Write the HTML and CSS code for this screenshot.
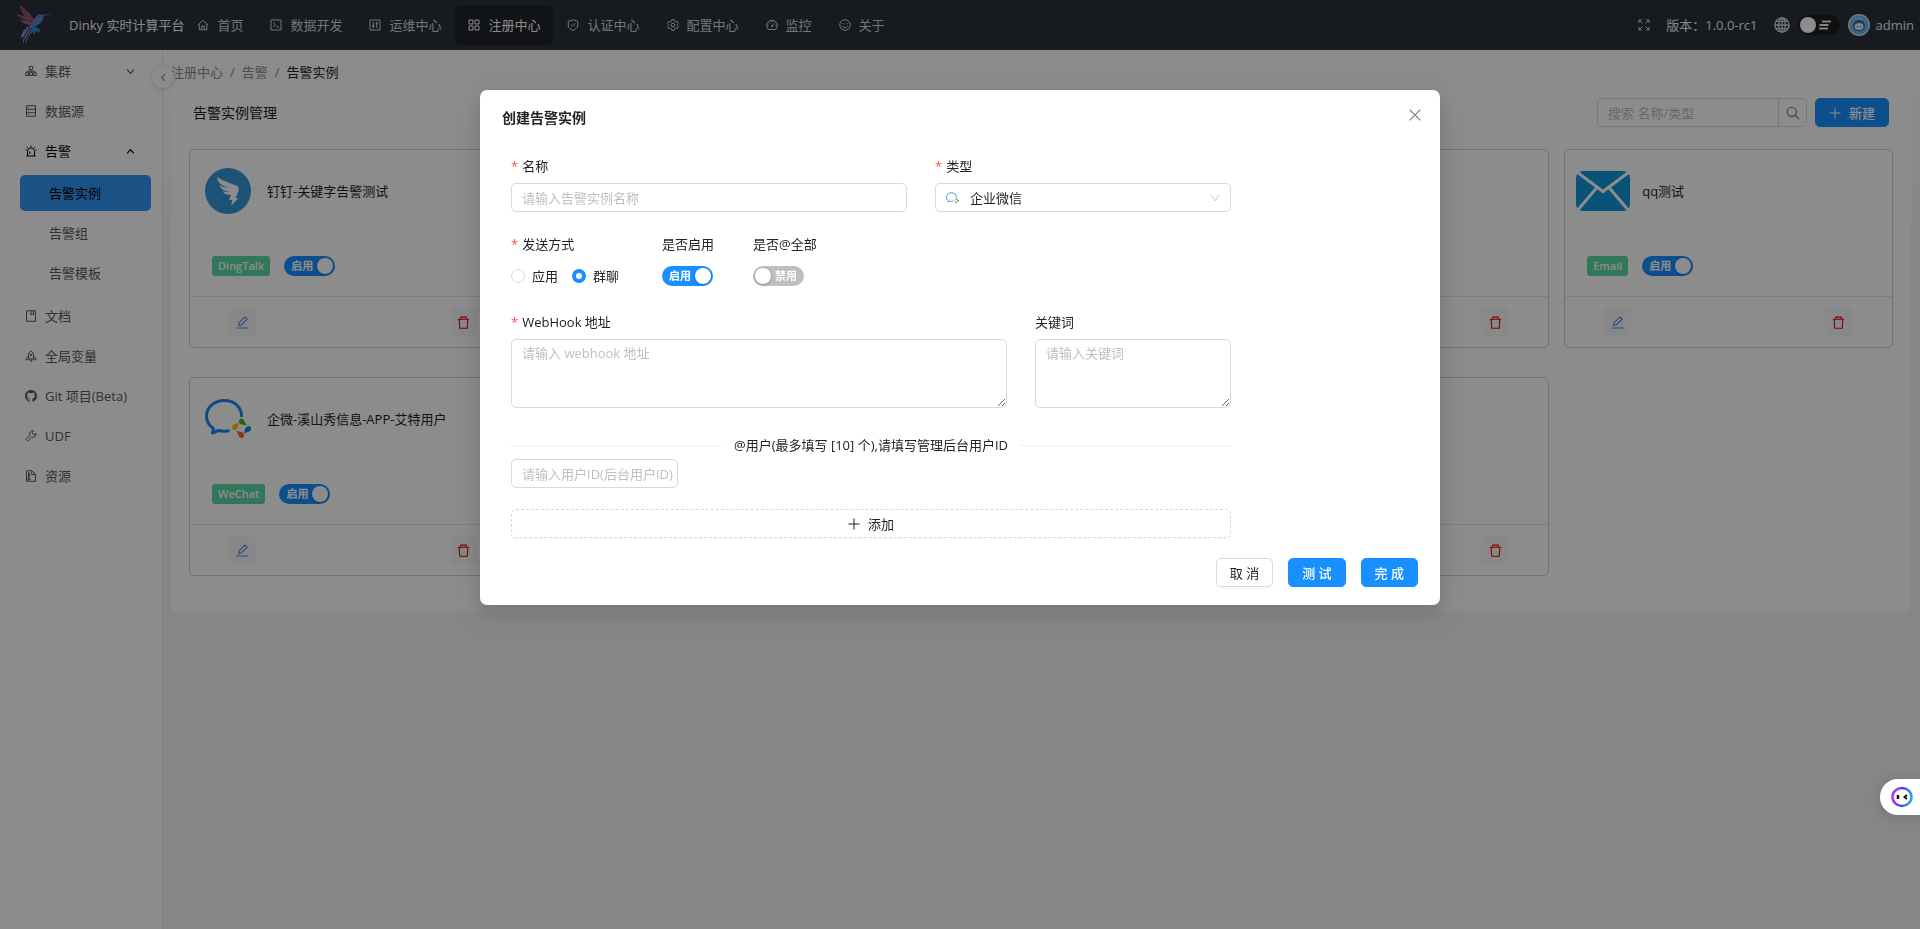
FILE: index.html
```html
<!DOCTYPE html>
<html lang="zh-CN">
<head>
<meta charset="utf-8">
<title>Dinky 实时计算平台</title>
<link rel="stylesheet" href="styles.css">
</head>
<body>
<svg class="sprite" aria-hidden="true">
  <symbol id="home" viewBox="0 0 24 24"><path d="M1.500 12.500 12 2.500l10.500 10M4.500 10.500V21.500h15V10.500M9.500 21v-7h5v7"/></symbol>
  <symbol id="code" viewBox="0 0 24 24"><path d="M2 2h20v20H2zM6.500 7.500l4.500 4-4.500 4M12.500 16h5"/></symbol>
  <symbol id="control" viewBox="0 0 24 24"><path d="M2 2h20v20H2zM8.500 6v12M15.500 6v12"/><circle cx="8.500" cy="14.500" r="1.600"/><circle cx="15.500" cy="9" r="1.600"/></symbol>
  <symbol id="grid" viewBox="0 0 24 24"><path d="M2 2h8v8H2zM14 2h8v8h-8zM2 14h8v8H2zM14 14h8v8h-8z"/></symbol>
  <symbol id="shield" viewBox="0 0 24 24"><path d="M12 1.500 21.500 4.500V14c0 3.500-5 6.500-9.500 9-4.500-2.500-9.500-5.500-9.500-9V4.500zM7.500 11l3.500 3.500 5.500-6"/></symbol>
  <symbol id="gear" viewBox="0 0 24 24"><path d="M9.500 1.500h5l.8 3.200 2.200 1.300 3.200-1 2.300 4.200-2.300 2.300v1l2.300 2.300-2.300 4.200-3.200-1-2.200 1.300-.8 3.200h-5l-.8-3.200L6.500 18l-3.200 1L1 14.800l2.300-2.300v-1L1 9.200 3.300 5l3.200 1 2.200-1.300z"/><circle cx="12" cy="12" r="3.600"/></symbol>
  <symbol id="dash" viewBox="0 0 24 24"><path d="M5 21a10.500 10.500 0 1 1 14 0zM12 14l4-5M12 4v3M5 7l2 2M3 13h2.500M18.500 13H21M17 6l1 1"/><circle cx="12" cy="14.500" r="1.500"/></symbol>
  <symbol id="smile" viewBox="0 0 24 24"><circle cx="12" cy="12" r="10.500"/><path d="M8 8v2M16 8v2M7.500 13.500c1 5.500 8 5.500 9 0"/></symbol>
  <symbol id="expand" viewBox="0 0 24 24"><path d="M2 8V2h6M2 2l7 7M16 2h6v6M22 2l-7 7M2 16v6h6M2 22l7-7M16 22h6v-6M22 22l-7-7"/></symbol>
  <symbol id="globe" viewBox="0 0 24 24"><circle cx="12" cy="12" r="10.500"/><ellipse cx="12" cy="12" rx="5" ry="10.500"/><path d="M12 1.500v21M1.500 12h21M3.500 6.500h17M3.500 17.500h17"/></symbol>
  <symbol id="cluster" viewBox="0 0 24 24"><path d="M8.500 3h7v6h-7zM1.500 15.500h6v5.500h-6zM9 15.500h6v5.500H9zM16.500 15.500h6v5.500h-6zM12 9v6.500M4.500 15.500v-3h15v3"/></symbol>
  <symbol id="database" viewBox="0 0 24 24"><path d="M3 1.500h18v21H3zM3 8.500h18M3 15.500h18M6.500 5h1M6.500 12h1M6.500 19h1"/></symbol>
  <symbol id="alert" viewBox="0 0 24 24"><path d="M5 22V12.500a7 7 0 0 1 14 0V22M2.500 22h19M9.500 18v-5M12 1v2.500M3.500 3.500l2 2M20.500 3.500l-2 2M1 10h2M21 10h2"/></symbol>
  <symbol id="book" viewBox="0 0 24 24"><path d="M3 1.500h18v21H3zM12 2v8l2.500-2 2.500 2V2"/></symbol>
  <symbol id="rocket" viewBox="0 0 24 24"><path d="M12 1.500c-4 3-5 6-5 9V18h10v-7.500c0-3-1-6-5-9zM7 12l-4.500 4.500V20L7 18M17 12l4.500 4.500V20L17 18M10 18v4h4v-4"/><circle cx="12" cy="10" r="1.800"/></symbol>
  <symbol id="github" viewBox="0 0 16 16"><path d="M8 0C3.580 0 0 3.580 0 8c0 3.540 2.290 6.530 5.470 7.590.4.070.55-.17.55-.38 0-.19-.01-.82-.01-1.490-2.010.37-2.530-.49-2.690-.94-.09-.23-.48-.94-.82-1.130-.28-.15-.68-.52-.01-.53.63-.01 1.080.58 1.230.82.72 1.210 1.870.87 2.330.66.07-.52.28-.87.51-1.070-1.780-.2-3.640-.89-3.640-3.950 0-.87.31-1.590.82-2.150-.08-.2-.36-1.020.08-2.120 0 0 .67-.21 2.200.82.64-.18 1.320-.27 2-.27s1.360.09 2 .27c1.530-1.040 2.200-.82 2.200-.82.44 1.100.16 1.920.08 2.120.51.56.82 1.270.82 2.150 0 3.070-1.870 3.750-3.650 3.950.29.25.54.73.54 1.480 0 1.070-.01 1.930-.01 2.200 0 .21.15.46.55.38A8.010 8.010 0 0 0 16 8c0-4.420-3.580-8-8-8z" fill="currentColor" stroke="none"/></symbol>
  <symbol id="tool" viewBox="0 0 24 24"><path d="M15.500 1.800a6.500 6.500 0 0 0-5.800 9L1.800 18.700l3.500 3.500 7.900-7.900a6.500 6.500 0 0 0 8.700-7.800L18 10.200 13.800 6l3.700-3.900z"/></symbol>
  <symbol id="zip" viewBox="0 0 24 24"><path d="M3 1.500h10.500l7.500 7v14H3zM13.500 2v7H21M7 4v12M9.500 6v8M6 17h4v3H6z"/></symbol>
  <symbol id="down" viewBox="0 0 24 24"><path d="M3 7l9 10 9-10"/></symbol>
  <symbol id="caret" viewBox="0 0 24 24"><path d="M2 4l10 15L22 4"/></symbol>
  <symbol id="up" viewBox="0 0 24 24"><path d="M3 17l9-10 9 10"/></symbol>
  <symbol id="left" viewBox="0 0 24 24"><path d="M16 3l-9 9 9 9"/></symbol>
  <symbol id="search" viewBox="0 0 24 24"><circle cx="10" cy="10" r="7.800"/><path d="M15.500 15.500l7 7"/></symbol>
  <symbol id="plus" viewBox="0 0 24 24"><path d="M12 1v22M1 12h22"/></symbol>
  <symbol id="close" viewBox="0 0 24 24"><path d="M3 3l18 18M21 3L3 21"/></symbol>
  <symbol id="edit" viewBox="0 0 24 24"><path d="M1 22h22M5 17.500l.7-5L16.500 1.800l4 4L9.800 16.500z"/></symbol>
  <symbol id="trash" viewBox="0 0 24 24"><path d="M1.500 6h21M7 6V2h10v4M4 6l1 16.500h14L20 6"/></symbol>
  <symbol id="dingtalk" viewBox="0 0 46 46"><circle cx="23" cy="23" r="23" fill="#3296d8"/><path d="M12 9c6 4 14 6 20 9 2 1 2 3 1.500 5-1 3-2 5-3 7h3L26 38l1.500-6H24l2-5c-4 0-7-1-8.500-4 2 1 5 1.300 7 1-5-1-9-3-10-7 3 2 6 2.500 9 2.500C17 18 12 14.500 12 9z" fill="#fff"/></symbol>
  <symbol id="wecom" viewBox="0 0 46 40"><path d="M36.500 18C37 8 29 1.500 19.500 1.500 9.500 1.500 1.500 8 1.500 17c0 5.500 2.500 9.500 7 12.500L7.500 34l6-2.500c4 1 7 1 11 .3" fill="none" stroke="#1488f0" stroke-width="3" stroke-linejoin="round"/><path d="M36 19.500c4 0 3 4 6 7-3-1-8 0-8-4 0-1.500 1-3 2-3z" fill="#3cb916"/><path d="M46 29c0 5-4 3-7 6 1-3 0-7 5-8 1 0 2 1 2 2z" fill="#1580e8"/><path d="M37 39c-4 0-3-4-6-7 3 1 8 0 8 4 0 2-1 3-2 3z" fill="#fb6417"/><path d="M27 29c0-5 4-3 7-6-1 3 0 7-4 8-2 0-3-1-3-2z" fill="#fcc700"/></symbol>
  <symbol id="mail" viewBox="0 0 54 40"><rect width="54" height="40" rx="7" fill="#1296db"/><path d="M1 1l26 19.500L53 1M1 40l20-23.500M53 40L33 16.500" fill="none" stroke="#fff" stroke-width="3"/></symbol>
</svg>

<header class="topbar">
  <svg class="logo" viewBox="0 0 40 42" aria-hidden="true">
    <path d="M5 1c4 4 9 7 12 12l3 4-3 4C12 21 7 19 5 16l7 1C7 15 3 13 2 10l9 3C8 10 5 6 5 1z" fill="#a8567f"/>
    <path d="M6 4l11 13M3 12l14 6" stroke="#55386b" fill="none"/>
    <path d="M18 17c3-6 6-8 10-6l10-2-9 3c-1 6-5 9-11 11l-3-2z" fill="#7770c8"/>
    <path d="M24 14c3-1 4 3 1 5l-5 4z" fill="#24a8bd"/>
    <path d="M16 21l4 2c-2 6-7 7-9 17l-1-6-2 6v-8l-2 3c0-7 4-11 10-14z" fill="#7e8aca"/>
    <path d="M15 23l-7 12M17 24l-7 13" stroke="#222447" fill="none"/>
    <path d="M17 22l8 3-1 4-3-2-2 4-2-4z" fill="#248fc6"/>
  </svg>
  <strong class="brand">Dinky 实时计算平台</strong>
  <nav class="topnav">
    <a href="#"><svg class="icon"><use href="#home"/></svg>首页</a>
    <a href="#"><svg class="icon"><use href="#code"/></svg>数据开发</a>
    <a href="#"><svg class="icon"><use href="#control"/></svg>运维中心</a>
    <a href="#" class="active"><svg class="icon"><use href="#grid"/></svg>注册中心</a>
    <a href="#"><svg class="icon"><use href="#shield"/></svg>认证中心</a>
    <a href="#"><svg class="icon"><use href="#gear"/></svg>配置中心</a>
    <a href="#"><svg class="icon"><use href="#dash"/></svg>监控</a>
    <a href="#"><svg class="icon"><use href="#smile"/></svg>关于</a>
  </nav>
  <div class="tools">
    <button class="plain" aria-label="全屏"><svg class="icon"><use href="#expand"/></svg></button>
    <span class="version">版本：1.0.0-rc1</span>
    <button class="plain" aria-label="语言"><svg class="icon globe"><use href="#globe"/></svg></button>
    <label class="theme"><input type="checkbox" aria-label="主题"><svg viewBox="0 0 14 10" aria-hidden="true"><path d="M4 1.500h9M1.500 5h9M1 8.500h9" stroke="currentColor" stroke-width="2.200"/></svg></label>
    <a href="#" class="user">
      <svg viewBox="0 0 22 22" aria-hidden="true"><circle cx="11" cy="11" r="11" fill="#c9dcec"/><circle cx="11" cy="11" r="9.500" fill="#6fb3ea"/><path d="M5 12c0-8 12-8 12 0 0 7-12 7-12 0z" fill="#2d72b8"/><ellipse cx="11" cy="12.500" rx="4.500" ry="3.500" fill="#e4edf5"/><path d="M7 4l2 2 2-3 2 3 2-2" stroke="#b9daf4" fill="none"/><path d="M9.500 12v1M12.500 12v1" stroke="#345"/></svg>
      admin
    </a>
  </div>
</header>

<div class="shell">
  <aside class="side">
    <nav class="menu">
      <a href="#"><svg class="icon"><use href="#cluster"/></svg><span>集群</span><svg class="icon arrow"><use href="#down"/></svg></a>
      <a href="#"><svg class="icon"><use href="#database"/></svg><span>数据源</span></a>
      <a href="#" class="open"><svg class="icon"><use href="#alert"/></svg><span>告警</span><svg class="icon arrow"><use href="#up"/></svg></a>
      <div class="submenu">
        <a href="#" class="selected">告警实例</a>
        <a href="#">告警组</a>
        <a href="#">告警模板</a>
      </div>
      <a href="#"><svg class="icon"><use href="#book"/></svg><span>文档</span></a>
      <a href="#"><svg class="icon"><use href="#rocket"/></svg><span>全局变量</span></a>
      <a href="#"><svg class="icon"><use href="#github"/></svg><span>Git 项目(Beta)</span></a>
      <a href="#"><svg class="icon"><use href="#tool"/></svg><span>UDF</span></a>
      <a href="#"><svg class="icon"><use href="#zip"/></svg><span>资源</span></a>
    </nav>
    <button class="collapse" aria-label="收起"><svg class="icon"><use href="#left"/></svg></button>
  </aside>

  <main class="page">
    <nav class="crumbs"><a href="#">注册中心</a><i>/</i><a href="#">告警</a><i>/</i><b>告警实例</b></nav>
    <section class="panel">
      <div class="panel-head">
        <h1>告警实例管理</h1>
        <div class="search">
          <input type="search" placeholder="搜索 名称/类型" aria-label="搜索">
          <button aria-label="搜索"><svg class="icon"><use href="#search"/></svg></button>
        </div>
        <button class="btn primary wide"><svg class="icon"><use href="#plus"/></svg>新建</button>
      </div>
      <div class="cards">
        <article class="card">
          <div class="card-body">
            <div class="card-title"><span class="pic"><svg class="ding"><use href="#dingtalk"/></svg></span><h2>钉钉-关键字告警测试</h2></div>
            <div class="card-state"><span class="tag">DingTalk</span><label class="switch"><span>启用</span><input type="checkbox" checked></label></div>
          </div>
          <div class="card-foot"><button class="act edit" aria-label="编辑"><svg class="icon"><use href="#edit"/></svg></button><button class="act del" aria-label="删除"><svg class="icon"><use href="#trash"/></svg></button></div>
        </article>
        <article class="card"></article>
        <article class="card"></article>
        <article class="card">
          <div class="card-body"></div>
          <div class="card-foot"><button class="act del" aria-label="删除"><svg class="icon"><use href="#trash"/></svg></button></div>
        </article>
        <article class="card">
          <div class="card-body">
            <div class="card-title"><span class="pic"><svg class="email"><use href="#mail"/></svg></span><h2>qq测试</h2></div>
            <div class="card-state"><span class="tag">Email</span><label class="switch"><span>启用</span><input type="checkbox" checked></label></div>
          </div>
          <div class="card-foot"><button class="act edit" aria-label="编辑"><svg class="icon"><use href="#edit"/></svg></button><button class="act del" aria-label="删除"><svg class="icon"><use href="#trash"/></svg></button></div>
        </article>
        <article class="card">
          <div class="card-body">
            <div class="card-title"><span class="pic"><svg class="wechat"><use href="#wecom"/></svg></span><h2>企微-溪山秀信息-APP-艾特用户</h2></div>
            <div class="card-state"><span class="tag">WeChat</span><label class="switch"><span>启用</span><input type="checkbox" checked></label></div>
          </div>
          <div class="card-foot"><button class="act edit" aria-label="编辑"><svg class="icon"><use href="#edit"/></svg></button><button class="act del" aria-label="删除"><svg class="icon"><use href="#trash"/></svg></button></div>
        </article>
        <article class="card"></article>
        <article class="card"></article>
        <article class="card">
          <div class="card-body"></div>
          <div class="card-foot"><button class="act del" aria-label="删除"><svg class="icon"><use href="#trash"/></svg></button></div>
        </article>
      </div>
    </section>
  </main>
</div>

<div class="mask">
  <div class="modal" role="dialog" aria-labelledby="dialog-title">
    <div class="modal-head">
      <h2 id="dialog-title">创建告警实例</h2>
      <button class="plain close" aria-label="关闭"><svg class="icon"><use href="#close"/></svg></button>
    </div>
    <form class="form">
      <div class="row name-row">
        <div class="field">
          <label class="required" for="name">名称</label>
          <input class="text" id="name" type="text" placeholder="请输入告警实例名称">
        </div>
        <div class="field">
          <label class="required" for="type">类型</label>
          <div class="select">
            <svg class="wecom-small" aria-hidden="true"><use href="#wecom"/></svg>
            <select id="type"><option>企业微信</option></select>
            <svg class="icon caret"><use href="#caret"/></svg>
          </div>
        </div>
      </div>
      <div class="row mode-row">
        <div class="field" role="radiogroup" aria-labelledby="mode-label">
          <span class="required label" id="mode-label">发送方式</span>
          <div class="radios">
            <label><input type="radio" name="mode">应用</label>
            <label><input type="radio" name="mode" checked>群聊</label>
          </div>
        </div>
        <div class="field">
          <label for="enabled">是否启用</label>
          <div class="control"><label class="switch"><span>启用</span><input type="checkbox" id="enabled" checked></label></div>
        </div>
        <div class="field">
          <label for="at-all">是否@全部</label>
          <div class="control"><label class="switch off"><input type="checkbox" id="at-all"><span>禁用</span></label></div>
        </div>
      </div>
      <div class="row hook-row">
        <div class="field">
          <label class="required" for="hook">WebHook 地址</label>
          <textarea class="text" id="hook" placeholder="请输入 webhook 地址"></textarea>
        </div>
        <div class="field">
          <label for="keyword">关键词</label>
          <textarea class="text" id="keyword" placeholder="请输入关键词"></textarea>
        </div>
      </div>
      <div class="divider"><span>@用户(最多填写 [10] 个),请填写管理后台用户ID</span></div>
      <input class="text user-id" type="text" placeholder="请输入用户ID(后台用户ID)" aria-label="用户ID">
      <button type="button" class="btn dashed"><svg class="icon"><use href="#plus"/></svg>添加</button>
    </form>
    <div class="modal-foot">
      <button class="btn">取 消</button>
      <button class="btn primary">测 试</button>
      <button class="btn primary">完 成</button>
    </div>
  </div>
</div>

<button class="assistant" aria-label="助手">
  <svg viewBox="0 0 22 22" aria-hidden="true">
    <defs><linearGradient id="ring" x1="0" y1="0.600" x2="1" y2="0.800"><stop offset="0" stop-color="#a63df5"/><stop offset="0.450" stop-color="#4c3cf5"/><stop offset="1" stop-color="#28b4e8"/></linearGradient></defs>
    <ellipse cx="11" cy="11" rx="9.500" ry="9" fill="none" stroke="url(#ring)" stroke-width="2.600"/>
    <path d="M7 9v4" stroke="#111" stroke-width="2.600"/><path d="M16 9l-2.500 2 2.500 2" stroke="#111" stroke-width="2" fill="none"/>
  </svg>
</button>
</body>
</html>
```
FILE: styles.css
```css
* { box-sizing: border-box; }

body {
  margin: 0;
  min-height: 100vh;
  display: flex;
  flex-direction: column;
  background: #f5f5f5;
  color: #222;
  font: 13px/20px "Open Sans", "Noto Sans CJK SC", sans-serif;
}

a { color: inherit; text-decoration: none; }
h1, h2 { margin: 0; font-weight: 400; }
button, input, select, textarea { margin: 0; font: inherit; color: inherit; }
button { cursor: pointer; }

.sprite { position: absolute; width: 0; height: 0; }

.icon {
  flex: none;
  width: 12px;
  height: 12px;
  fill: none;
  stroke: currentColor;
  stroke-width: 2;
}

.plain { display: flex; padding: 0; border: 0; background: none; }

/* top bar */
.topbar {
  display: flex;
  align-items: center;
  height: 50px;
  padding: 0 6px 0 15px;
  background: #2a3137;
  color: #d4d6d7;
}

.logo { flex: none; width: 40px; height: 42px; margin-right: 14px; }
.brand { font-weight: 400; color: #f5f5f5; white-space: nowrap; }
.topnav { display: flex; gap: 1px; white-space: nowrap; }

.topnav a {
  display: flex;
  align-items: center;
  gap: 8px;
  height: 40px;
  padding: 0 13px;
  border-radius: 5px;
}

.topnav .active { background: #1f2428; color: #fff; }

.tools { display: flex; align-items: center; gap: 8px; margin-left: auto; white-space: nowrap; }
.version { padding: 0 8px; color: #f0f0f0; }
.globe { width: 16px; height: 16px; }

.theme {
  display: flex;
  align-items: center;
  justify-content: space-between;
  width: 42px;
  height: 20px;
  padding: 0 8px 0 2px;
  border-radius: 10px;
  background: #1d1f20;
  color: #eee;
}

.theme input { appearance: none; width: 16px; height: 16px; border-radius: 50%; background: #fff; }
.theme svg { width: 14px; height: 10px; }
.user { display: flex; align-items: center; gap: 6px; color: #eee; }
.user svg { width: 22px; height: 22px; }

/* side menu */
.shell { display: flex; flex: 1; }

.side {
  position: relative;
  flex: none;
  width: 163px;
  padding: 3px 11px 0 20px;
  border-right: 1px solid #ececec;
  background: #fff;
}

.menu, .submenu { display: flex; flex-direction: column; gap: 4px; }
.submenu { margin: 2px 0 3px; }

.menu a {
  display: flex;
  align-items: center;
  gap: 8px;
  height: 36px;
  padding: 0 16px 0 5px;
  border-radius: 5px;
  color: #595959;
}

.menu .open { color: #000; }
.menu .arrow { width: 9px; height: 9px; margin-left: auto; stroke-width: 3; }
.menu .submenu a { padding-left: 29px; }
.menu .submenu .selected { background: #3296f5; color: #000; }

.collapse {
  position: absolute;
  top: 16px;
  right: -12px;
  display: grid;
  place-items: center;
  width: 22px;
  height: 22px;
  padding: 0;
  border: 0;
  border-radius: 50%;
  background: #fff;
  color: #888;
  box-shadow: 0 1px 5px rgba(0, 0, 0, 0.15);
}

.collapse .icon { width: 9px; height: 9px; stroke-width: 3; }

/* page */
.page {
  flex: 1;
  min-width: 0;
  padding: 12px 9px 0 8px;
  background: linear-gradient(#fff, #f5f5f5 200px);
}

.crumbs { display: flex; gap: 7px; margin-bottom: 2px; color: #8c8c8c; }
.crumbs i { font-style: normal; }
.crumbs b { font-weight: 400; color: #222; }

.panel { padding: 14px 18px 36px; border-radius: 5px; background: #fff; }

.panel-head { display: flex; align-items: center; gap: 8px; padding: 0 4px; margin-bottom: 22px; }
.panel-head h1 { margin-right: auto; font-size: 14px; }

.search { display: flex; }

.search input {
  width: 182px;
  height: 29px;
  padding: 0 10px;
  border: 1px solid #d9d9d9;
  border-radius: 5px 0 0 5px;
  background: #fff;
}

.search button {
  display: grid;
  place-items: center;
  width: 28px;
  padding: 0;
  border: 1px solid #d9d9d9;
  border-left: 0;
  border-radius: 0 5px 5px 0;
  background: #fff;
  color: #777;
}

.search .icon { width: 14px; height: 14px; }

::placeholder { color: #bfbfbf; opacity: 1; }

.btn {
  display: flex;
  align-items: center;
  justify-content: center;
  gap: 8px;
  height: 29px;
  padding: 0 13px;
  border: 1px solid #d9d9d9;
  border-radius: 5px;
  background: #fff;
  box-shadow: 0 2px 0 rgba(0, 0, 0, 0.02);
}

.btn.primary { border-color: #1890ff; background: #1890ff; color: #fff; font-weight: 500; }
.btn.wide { width: 74px; }

.cards { display: grid; grid-template-columns: repeat(5, 1fr); gap: 29px 15px; }

.card {
  display: flex;
  flex-direction: column;
  min-height: 199px;
  border: 1px solid #d0d0d0;
  border-radius: 5px;
}

.card-body { flex: 1; padding: 14px 11px 0; }
.card-title { display: flex; align-items: center; gap: 12px; height: 54px; }
.card-title h2 { font-size: 13px; }
.pic { display: grid; place-items: center; width: 54px; }
.ding { width: 46px; height: 46px; }
.wechat { width: 46px; height: 40px; }
.email { width: 54px; height: 40px; }
.card-state { display: flex; align-items: center; gap: 14px; padding: 38px 11px 0; }

.tag {
  padding: 0 6px;
  border-radius: 3px;
  background: #5bd8a6;
  color: #fff;
  font-size: 11px;
  font-weight: 600;
}

.card-foot {
  display: flex;
  align-items: center;
  height: 51px;
  padding: 0 39px 0 38px;
  border-top: 1px solid #e8e8e8;
}

.act {
  display: grid;
  place-items: center;
  width: 28px;
  height: 28px;
  padding: 0;
  border: 0;
  border-radius: 5px;
  background: #f8f8f8;
}

.act .icon { width: 13px; height: 13px; }
.edit { color: #4a87ee; }
.del { margin-left: auto; color: #f00000; }

.switch {
  display: flex;
  align-items: center;
  justify-content: space-between;
  width: 51px;
  height: 20px;
  padding: 0 2px 0 7px;
  border-radius: 10px;
  background: #1890ff;
  color: #fff;
  font-size: 11px;
  font-weight: 700;
}

.switch.off { padding: 0 7px 0 2px; background: #bfbfbf; }

.switch input {
  appearance: none;
  width: 16px;
  height: 16px;
  border-radius: 50%;
  background: #fff;
  box-shadow: 0 1px 3px rgba(0, 35, 11, 0.3);
}

/* dialog */
.mask {
  position: fixed;
  inset: 0;
  display: flex;
  align-items: flex-start;
  justify-content: center;
  padding-top: 90px;
  background: rgba(0, 0, 0, 0.45);
}

.modal {
  width: 50%;
  min-width: 780px;
  padding: 18px 22px;
  border-radius: 7px;
  background: #fff;
  box-shadow: 0 6px 16px rgba(0, 0, 0, 0.1), 0 9px 28px 8px rgba(0, 0, 0, 0.08);
}

.modal-head { display: flex; align-items: flex-start; justify-content: space-between; }
.modal-head h2 { font-size: 14px; font-weight: 700; }
.close { padding: 0; color: #888; }
.close .icon { width: 14px; height: 14px; margin-right: -4px; }

.form { max-width: 720px; margin: 28px 9px 20px; }
.row { display: grid; margin-bottom: 22px; }
.name-row { grid-template-columns: 396fr 296fr; column-gap: 28px; }
.mode-row { display: flex; gap: 39px; }
.hook-row { grid-template-columns: 496fr 196fr; column-gap: 28px; margin-bottom: 27px; }

.field { display: flex; flex-direction: column; gap: 7px; }
.required::before { content: "*"; margin-right: 4px; color: #ff4d4f; }

.text {
  display: block;
  width: 100%;
  height: 29px;
  padding: 0 10px;
  border: 1px solid #d9d9d9;
  border-radius: 5px;
  background: #fff;
}

textarea.text { height: 69px; padding: 3px 10px; }

.select {
  display: flex;
  align-items: center;
  height: 29px;
  padding: 0 10px;
  border: 1px solid #d9d9d9;
  border-radius: 5px;
}

.select select { flex: 1; appearance: none; padding: 0 0 0 11px; border: 0; background: none; outline: 0; }
.wecom-small { width: 13px; height: 12px; }
.caret { width: 10px; height: 10px; color: #bfbfbf; }

.radios, .control { display: flex; align-items: center; height: 29px; }
.radios { gap: 14px; padding-right: 4px; }
.radios label { display: flex; align-items: center; gap: 7px; }

.radios input {
  appearance: none;
  width: 14px;
  height: 14px;
  border: 1px solid #d9d9d9;
  border-radius: 50%;
  background: #fff;
}

.radios input:checked { border: 4px solid #1890ff; }

.divider { display: flex; align-items: center; gap: 12px; margin-bottom: 4px; }
.divider::before, .divider::after { content: ""; flex: 1; border-top: 1px solid #f0f0f0; }

.user-id { width: 167px; padding-right: 4px; }
.btn.dashed { width: 100%; margin-top: 21px; border-style: dashed; }

.modal-foot { display: flex; justify-content: flex-end; gap: 15px; }

/* floating helper */
.assistant {
  position: fixed;
  right: 0;
  bottom: 114px;
  display: flex;
  align-items: center;
  width: 40px;
  height: 36px;
  padding: 0 0 0 11px;
  border: 0;
  border-radius: 18px 0 0 18px;
  background: #fff;
  box-shadow: 0 2px 12px rgba(0, 0, 0, 0.15);
}

.assistant svg { width: 22px; height: 22px; }
```
